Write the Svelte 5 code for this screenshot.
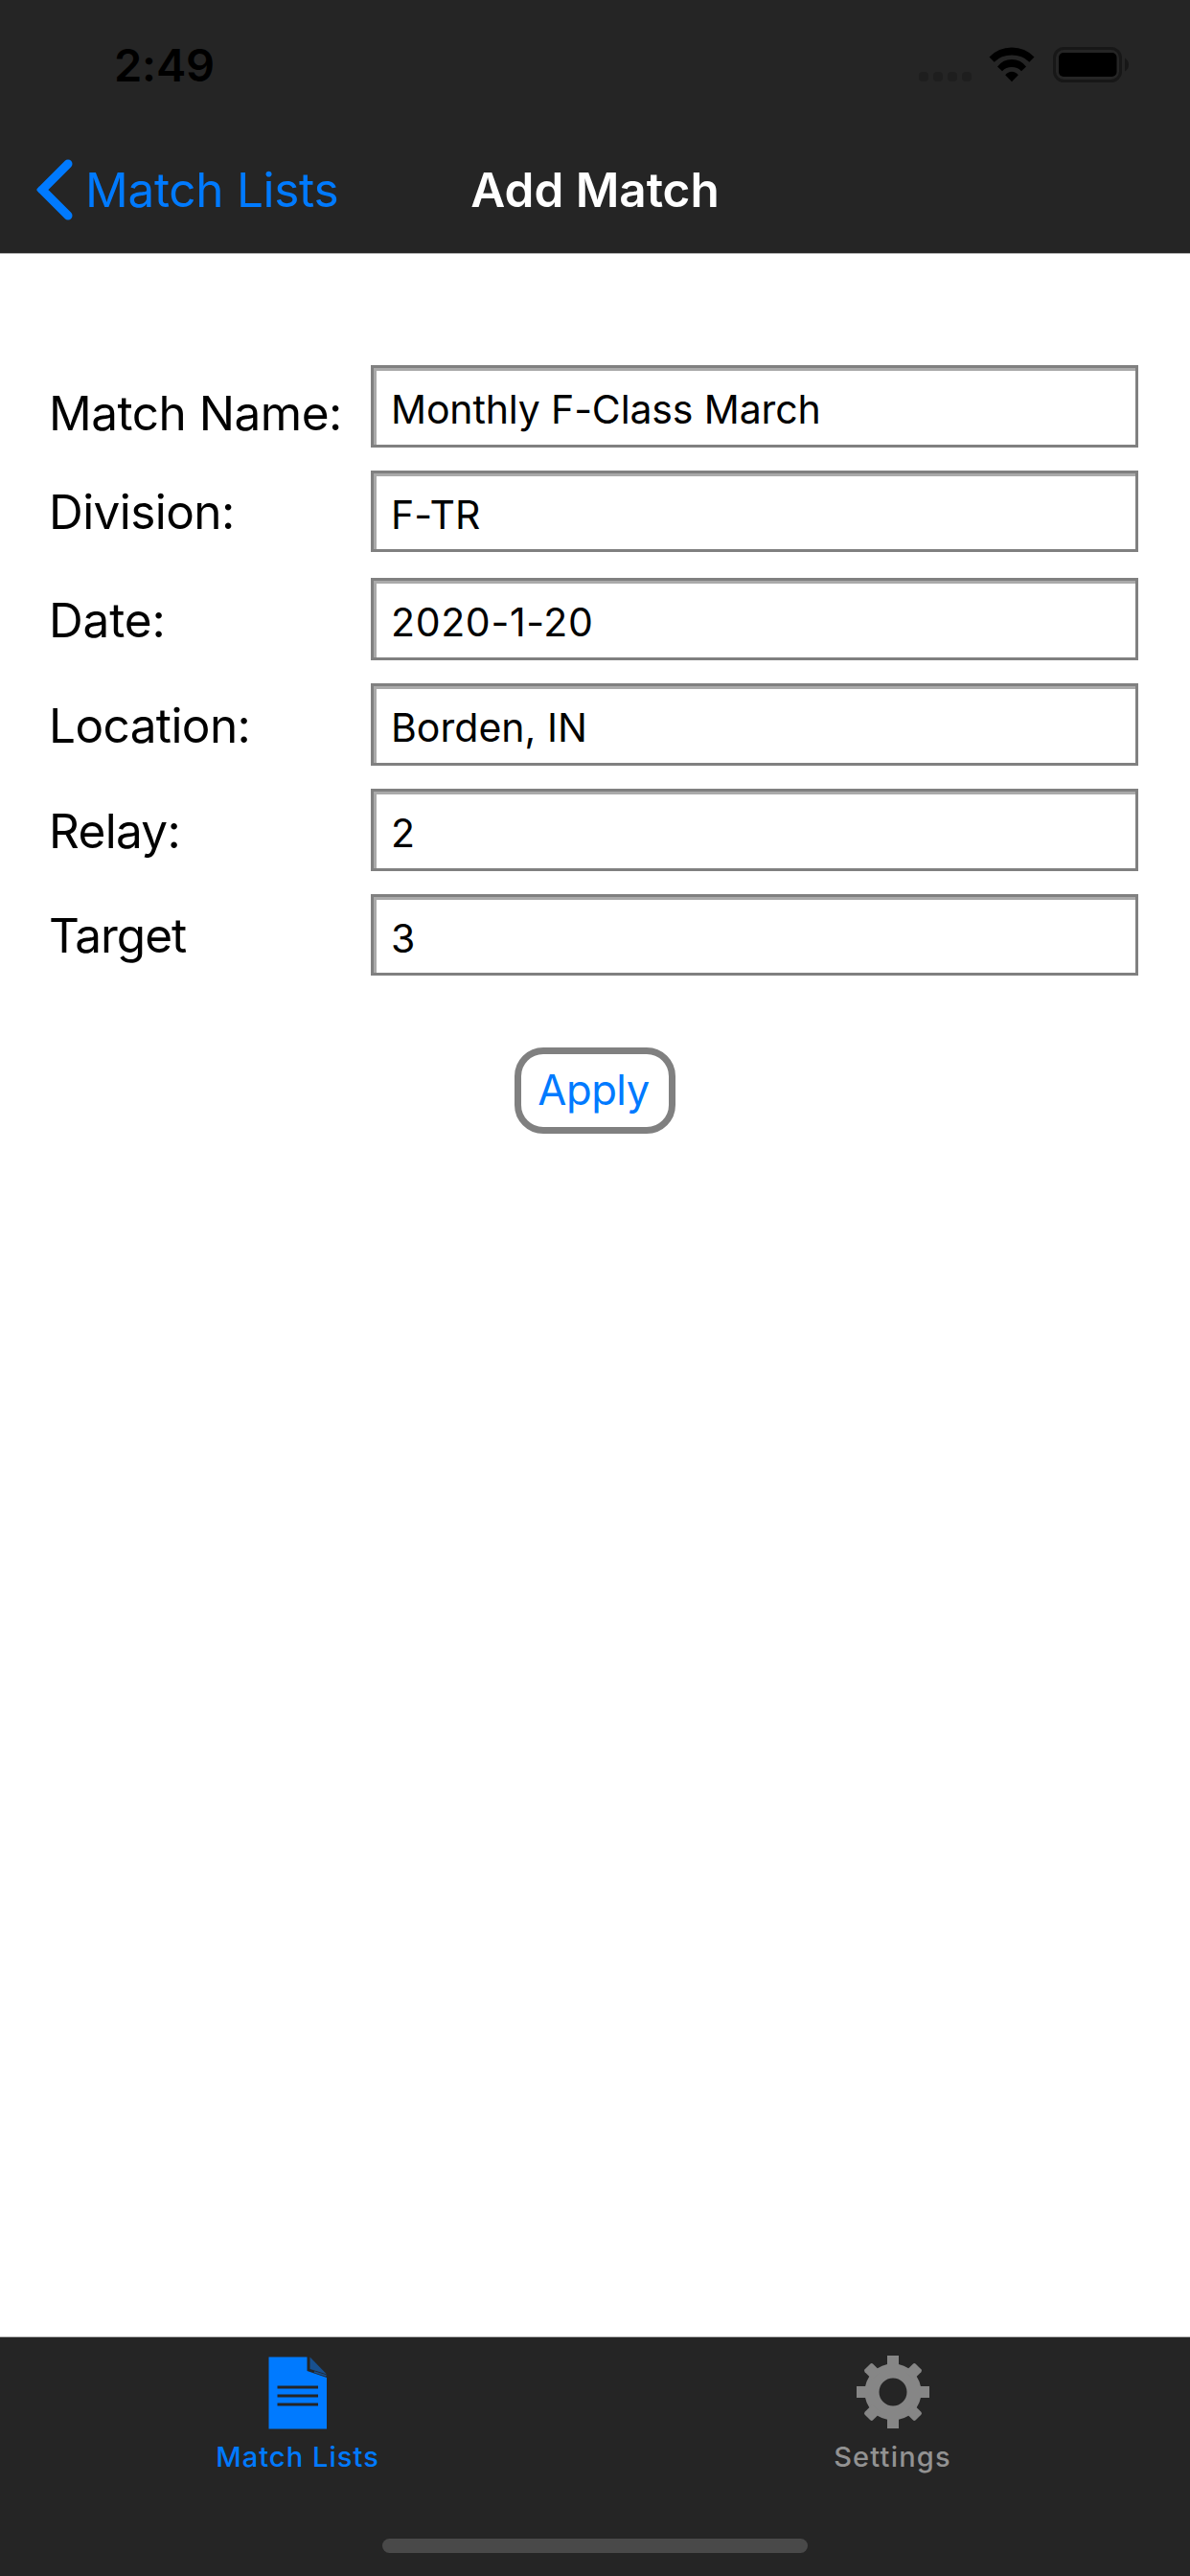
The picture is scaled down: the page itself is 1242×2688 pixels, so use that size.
<script>
  // Tracking values are in pixels.
  const fields = [
    { label: 'Match Name:', value: 'Monthly F-Class March', labelTracking: -0.5, valueTracking: -0.14 },
    { label: 'Division:', value: 'F-TR', labelTracking: -0.57, valueTracking: 0.17 },
    { label: 'Date:', value: '2020-1-20', labelTracking: -0.15, valueTracking: 0.66 },
    { label: 'Location:', value: 'Borden, IN', labelTracking: -0.6, valueTracking: 0.03 },
    { label: 'Relay:', value: '2', labelTracking: -0.67, valueTracking: 0 },
    { label: 'Target', value: '3', labelTracking: -1.03, valueTracking: 0 }
  ];
</script>

<div class="screen">
  <header>
    <div class="status">
      <span class="time">2:49</span>
      <div class="indicators">
        <span class="dots"><i></i><i></i><i></i><i></i></span>
        <svg class="wifi" width="48" height="37" viewBox="0 0 48 37">
          <path d="M0.5 10.6Q10 0.5 24 0.5T47.5 10.6L42.3 15.7Q35 8.6 24 8.6T5.7 15.7Z" />
          <path d="M9 20.4Q15 13 24 13T39 20.4L34 25.2Q30 21 24 21T14 25.2Z" />
          <path d="M17.2 29.3Q20 25.8 24 25.8T30.8 29.3L24 36.3Z" />
        </svg>
        <svg class="battery" width="80" height="38" viewBox="0 0 80 38">
          <rect x="1.5" y="1.5" width="69" height="34" rx="10" fill="none" stroke="#171717" stroke-width="3" />
          <rect x="6" y="6" width="60.5" height="25" rx="5" />
          <path d="M75 11.5Q79 14 79 18.5T75 25.5Z" fill="#171717" />
        </svg>
      </div>
    </div>
    <nav class="navbar">
      <button class="back">
        <svg width="40" height="64" viewBox="0 0 40 64">
          <path d="M33 5L6 32L33 59" fill="none" stroke="#007aff" stroke-width="9" stroke-linecap="round" stroke-linejoin="bevel" />
          <path d="M3 28.6L0.6 31Q0 32 0.6 33L3 35.4Z" fill="#007aff" />
        </svg>
        <span>Match Lists</span>
      </button>
      <h1>Add Match</h1>
      <div></div>
    </nav>
  </header>

  <main>
    <div class="form">
      {#each fields as field}
        <label>
          <span style:letter-spacing="{field.labelTracking}px">{field.label}</span>
          <input type="text" value={field.value} style:letter-spacing="{field.valueTracking}px" />
        </label>
      {/each}
    </div>
    <button class="apply">Apply</button>
  </main>

  <footer>
    <div class="tabs">
      <button class="tab active">
        <svg width="80" height="80" viewBox="0 0 80 80">
          <path d="M9.5 2.5H49.5V17L70 24V77.5H9.5Z" fill="#007aff" />
          <path d="M52.5 2.5V15L70 20.5Z" fill="#18508f" />
          <path d="M57 18L69.5 22" stroke="#18508f" stroke-width="1.5" />
          <path d="M18.5 34H61M18.5 43H61M18.5 52H61" stroke="#252525" stroke-width="3" />
        </svg>
        <span>Match Lists</span>
      </button>
      <button class="tab">
        <svg width="80" height="80" viewBox="-40 -39 80 80">
          <circle r="22" fill="none" stroke="#868686" stroke-width="15" />
          <g fill="#868686">
            {#each [0, 90, 180, 270] as angle}
              <rect x="-6" y="-38" width="12" height="13" transform="rotate({angle})" />
              <rect x="-6" y="-37.5" width="12" height="13" rx="2" transform="rotate({angle + 45})" />
            {/each}
          </g>
        </svg>
        <span>Settings</span>
      </button>
    </div>
    <div class="home"></div>
  </footer>
</div>

<style>
  :global(body) {
    margin: 0;
    background: #fff;
  }

  .screen {
    width: 1242px;
    height: 2688px;
    display: flex;
    flex-direction: column;
    background: #fff;
    color: #000;
    font-family: Inter, 'Liberation Sans', sans-serif;
  }

  button {
    appearance: none;
    border: 0;
    padding: 0;
    background: none;
    font-family: inherit;
    color: #007aff;
  }

  svg {
    display: block;
    flex: none;
  }

  header {
    height: 264px;
    flex: none;
    background: #252525;
    border-bottom: 1px solid #b2b2b2;
  }

  .status {
    height: 132px;
    box-sizing: border-box;
    display: flex;
    justify-content: space-between;
    align-items: flex-start;
    padding: 0 63px 0 119px;
  }

  .time {
    margin-top: 38px;
    font-size: 47px;
    font-weight: 600;
    line-height: 60px;
    letter-spacing: -0.19px;
  }

  .indicators {
    display: flex;
    margin-top: 49px;
  }

  .dots {
    display: flex;
    gap: 5px;
    margin: 26px 18px 0 0;
  }

  .dots i {
    width: 10px;
    height: 10px;
    border-radius: 4px;
    background: #1e1e1e;
  }

  .battery {
    margin-left: 19px;
  }

  .navbar {
    height: 132px;
    display: grid;
    grid-template-columns: 1fr auto 1fr;
    align-items: center;
  }

  .back {
    display: flex;
    align-items: center;
    gap: 11px;
    padding-left: 38px;
    font-size: 49.5px;
    line-height: 60px;
    letter-spacing: -0.3px;
  }

  h1 {
    margin: 0;
    font-size: 49.5px;
    font-weight: 600;
    line-height: 60px;
    letter-spacing: -0.05px;
    color: #fff;
  }

  main {
    flex: 1;
    display: flex;
    flex-direction: column;
    align-items: center;
    padding: 116px 54px 0 51px;
  }

  .form {
    width: 100%;
    display: grid;
    grid-template-rows: 110px 112px 110px 110px 110px 85px;
  }

  label {
    display: grid;
    grid-template-columns: 336px 801px;
    align-items: start;
    font-size: 49.5px;
    line-height: 86px;
  }

  label:first-child span {
    padding-top: 7px;
  }

  label:nth-child(n + 3):nth-child(-n + 5) span {
    padding-top: 1px;
  }

  input {
    box-sizing: border-box;
    width: 100%;
    height: 86px;
    margin: 0;
    padding: 6px 20px 0 18px;
    border: 3px solid #808080;
    border-radius: 0;
    outline: none;
    background: #fff;
    box-shadow: inset 3px 3px 0 #aaa;
    color: #000;
    font-family: inherit;
    font-size: 41px;
    line-height: 74px;
  }

  label:nth-child(2) input,
  label:last-child input {
    height: 85px;
    padding-top: 7px;
  }

  .apply {
    box-sizing: border-box;
    width: 168px;
    height: 90px;
    margin: 75px 0 0 3px;
    padding-right: 3px;
    border: 7px solid #808080;
    border-radius: 30px;
    font-size: 43.6px;
    line-height: 76px;
    letter-spacing: -0.48px;
  }

  footer {
    height: 249px;
    flex: none;
    display: flex;
    flex-direction: column;
    justify-content: space-between;
    align-items: center;
    background: #252525;
    border-top: 1px solid #b2b2b2;
  }

  .tabs {
    width: 100%;
    display: grid;
    grid-template-columns: 1fr 1fr;
  }

  .tab {
    display: flex;
    flex-direction: column;
    align-items: center;
    padding-top: 18px;
    font-size: 29px;
    font-weight: 500;
    line-height: 40px;
    letter-spacing: 1.2px;
    color: #929292;
  }

  .tab.active {
    letter-spacing: 1.06px;
    color: #007aff;
  }

  .tab span {
    margin-top: 7px;
  }

  .home {
    width: 444px;
    height: 15px;
    margin-bottom: 24px;
    border-radius: 8px;
    background: #494949;
  }
</style>
